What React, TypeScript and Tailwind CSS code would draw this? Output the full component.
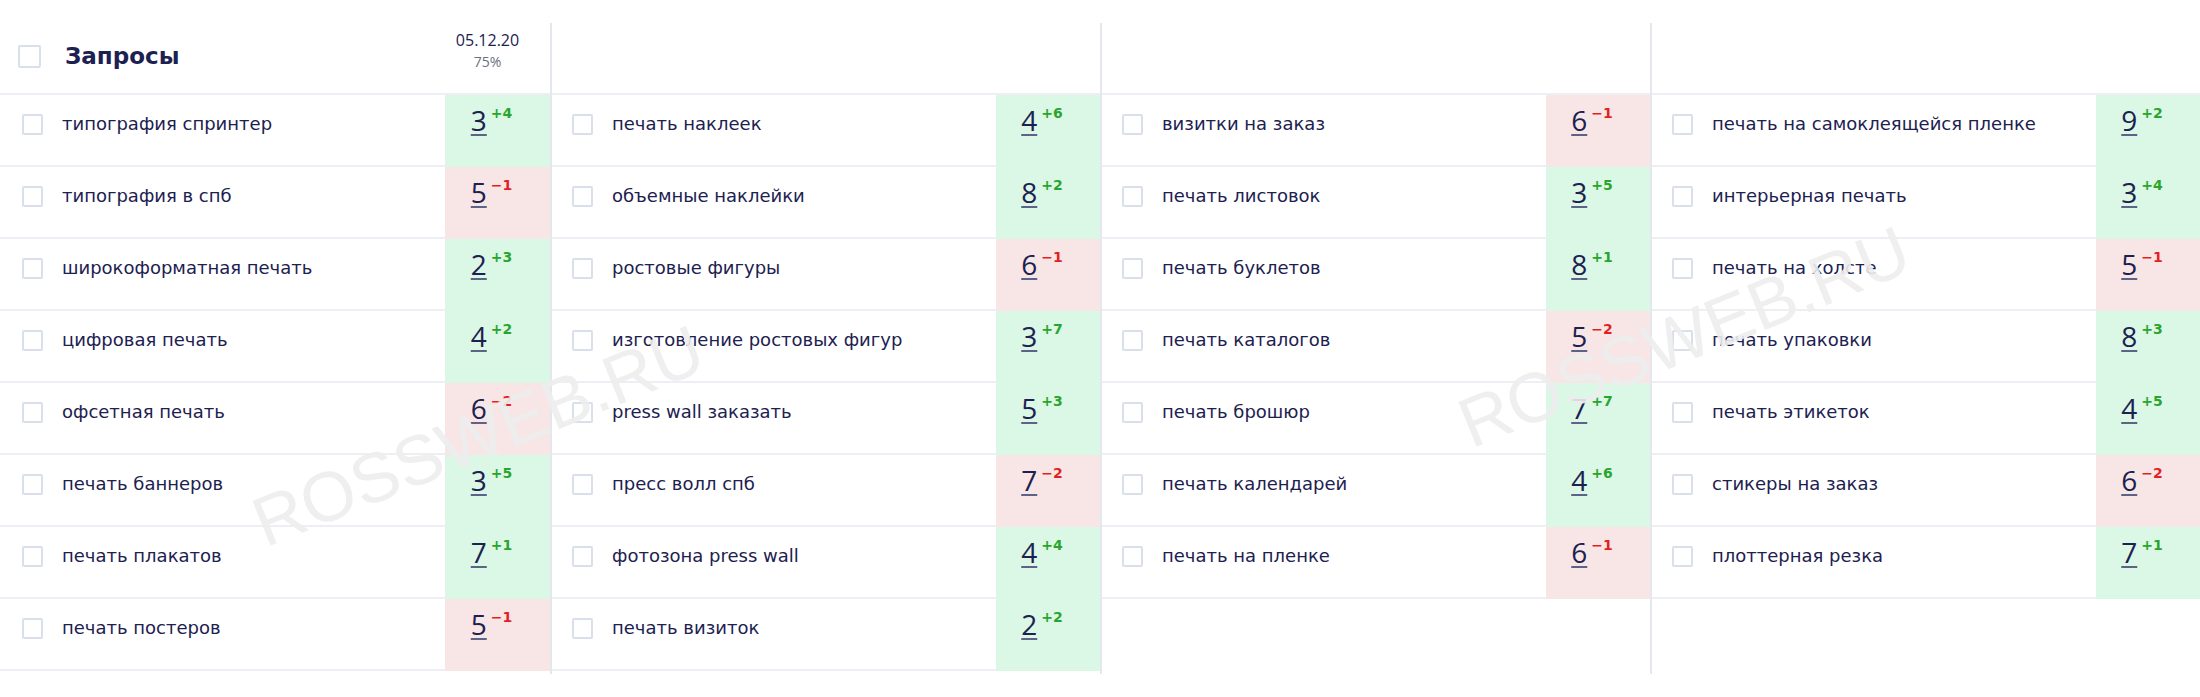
import React from "react";

type Item = { t: string; n: number; d: number };

const cols: Item[][] = [
  [
    { t: "типография спринтер", n: 3, d: 4 },
    { t: "типография в спб", n: 5, d: -1 },
    { t: "широкоформатная печать", n: 2, d: 3 },
    { t: "цифровая печать", n: 4, d: 2 },
    { t: "офсетная печать", n: 6, d: -2 },
    { t: "печать баннеров", n: 3, d: 5 },
    { t: "печать плакатов", n: 7, d: 1 },
    { t: "печать постеров", n: 5, d: -1 },
  ],
  [
    { t: "печать наклеек", n: 4, d: 6 },
    { t: "объемные наклейки", n: 8, d: 2 },
    { t: "ростовые фигуры", n: 6, d: -1 },
    { t: "изготовление ростовых фигур", n: 3, d: 7 },
    { t: "press wall заказать", n: 5, d: 3 },
    { t: "пресс волл спб", n: 7, d: -2 },
    { t: "фотозона press wall", n: 4, d: 4 },
    { t: "печать визиток", n: 2, d: 2 },
  ],
  [
    { t: "визитки на заказ", n: 6, d: -1 },
    { t: "печать листовок", n: 3, d: 5 },
    { t: "печать буклетов", n: 8, d: 1 },
    { t: "печать каталогов", n: 5, d: -2 },
    { t: "печать брошюр", n: 7, d: 7 },
    { t: "печать календарей", n: 4, d: 6 },
    { t: "печать на пленке", n: 6, d: -1 },
  ],
  [
    { t: "печать на самоклеящейся пленке", n: 9, d: 2 },
    { t: "интерьерная печать", n: 3, d: 4 },
    { t: "печать на холсте", n: 5, d: -1 },
    { t: "печать упаковки", n: 8, d: 3 },
    { t: "печать этикеток", n: 4, d: 5 },
    { t: "стикеры на заказ", n: 6, d: -2 },
    { t: "плоттерная резка", n: 7, d: 1 },
  ],
];

function Row({ item, first }: { item: Item; first: boolean }) {
  const up = item.d > 0;
  return (
    <div className="flex h-[72px] shrink-0">
      <div
        className={
          first
            ? "flex flex-1 items-center gap-[19px] border-b-2 border-[#eeeff5] pb-3 pl-[22px]"
            : "flex flex-1 items-center gap-[19px] border-b-2 border-[#eeeff5] pb-3 pl-[20px]"
        }
      >
        <span className="block h-[21px] w-[21px] shrink-0 rounded-[2px] border-2 border-[#d9dfeb]" />
        <span className="text-[18px] leading-none whitespace-nowrap">{item.t}</span>
      </div>
      <div
        className={
          (first ? "w-[105px] " : "w-[104px] ") +
          (up ? "bg-[#dbf7e5] " : "bg-[#f8e6e6] ") +
          "flex shrink-0 items-start justify-center pr-3 pt-[11px]"
        }
      >
        <span className="font-['Open_Sans',sans-serif] text-[28px] leading-none text-[#1c2150] underline decoration-[#5d6386] decoration-[1.5px] underline-offset-[3px]">
          {item.n}
        </span>
        <span
          className={
            up
              ? "ml-[4px] text-[14px] font-bold leading-none text-[#2aa52c]"
              : "ml-[4px] text-[14px] font-bold leading-none text-[#e41f1f]"
          }
        >
          {up ? `+${item.d}` : `−${-item.d}`}
        </span>
      </div>
    </div>
  );
}

export default function App() {
  return (
    <div className="relative h-[697px] w-[2200px] overflow-hidden bg-white font-['DejaVu_Sans',sans-serif] text-[#1c2150]">
      <div className="flex pt-[23px]">
        {cols.map((col, ci) => (
          <div
            key={ci}
            className={
              ci === 0
                ? "flex h-[651px] w-[550px] shrink-0 flex-col"
                : "flex h-[651px] w-[550px] shrink-0 flex-col border-l-2 border-[#e5e7ef]"
            }
          >
            <div className="flex h-[72px] shrink-0 border-b-2 border-[#eeeff5]">
              {ci === 0 && (
                <>
                  <div className="flex flex-1 items-center gap-[24px] pb-[3px] pl-[18px]">
                    <span className="block h-[23px] w-[23px] shrink-0 rounded-[2px] border-2 border-[#d9dfeb]" />
                    <span className="text-[23px] font-bold leading-none">Запросы</span>
                  </div>
                  <div className="flex w-[105px] shrink-0 flex-col items-center gap-[7px] pr-5 pt-[9px] font-['Open_Sans',sans-serif]">
                    <span className="text-[16px] leading-none text-[#1c2150]">05.12.20</span>
                    <span className="text-[14px] leading-none text-[#6b6f80]">75%</span>
                  </div>
                </>
              )}
            </div>
            {col.map((item, ri) => (
              <Row key={ri} item={item} first={ci === 0} />
            ))}
          </div>
        ))}
      </div>
      <div className="pointer-events-none absolute left-[478px] top-[436px] -translate-x-1/2 -translate-y-1/2 -rotate-[22deg] whitespace-nowrap font-['Liberation_Sans',sans-serif] text-[70px] leading-none text-[#eeeeee] opacity-90">
        ROSSWEB.RU
      </div>
      <div className="pointer-events-none absolute left-[1684px] top-[337px] -translate-x-1/2 -translate-y-1/2 -rotate-[22deg] whitespace-nowrap font-['Liberation_Sans',sans-serif] text-[70px] leading-none text-[#eeeeee] opacity-90">
        ROSSWEB.RU
      </div>
    </div>
  );
}
